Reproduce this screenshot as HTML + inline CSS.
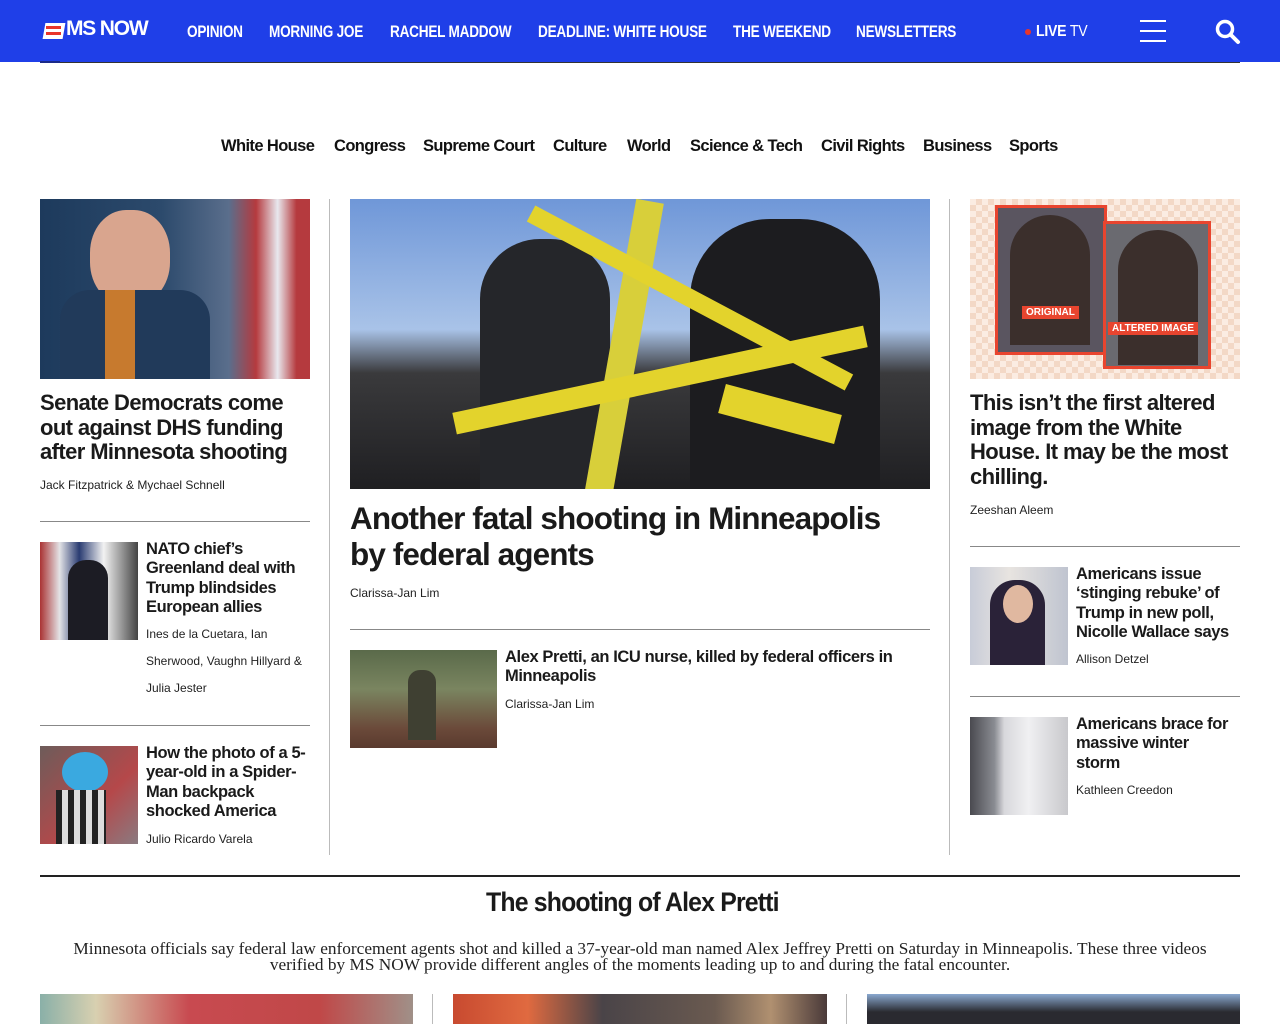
<!DOCTYPE html>
<html><head><meta charset="utf-8"><style>
*{margin:0;padding:0;box-sizing:border-box}
body{width:1280px;height:1024px;overflow:hidden;background:#fff;font-family:"Liberation Sans",sans-serif;color:#1a1a1a;position:relative}
.a{position:absolute}
.hdr{left:0;top:0;width:1280px;height:62px;background:#1f3fe8}
.nav{top:22px;color:#fff;font-weight:bold;font-size:17px;white-space:nowrap;transform:scaleX(0.8);transform-origin:0 0;letter-spacing:-0.3px}
.sec{top:137px;font-weight:bold;font-size:16.5px;color:#111;white-space:nowrap;letter-spacing:-0.6px}
h2{font-size:22px;line-height:24.5px;font-weight:bold;letter-spacing:-0.6px;color:#1a1a1a}
h3{font-size:16.5px;line-height:19.3px;font-weight:bold;letter-spacing:-0.4px;color:#1a1a1a}
.by{font-size:12px;color:#222;line-height:27px}
.hr{height:1px;background:#888}
.vr{width:1px;background:#bbb}
</style></head><body>
<div class="a hdr"></div>
<div class="a" style="left:40px;top:23px;width:24px;height:16px">
 <div class="a" style="left:4px;top:0;width:20px;height:16px;background:#fff;transform:skewX(-10deg)"></div>
 <div class="a" style="left:6px;top:3px;width:15px;height:3px;background:#e8352b"></div>
 <div class="a" style="left:6px;top:9px;width:15px;height:3px;background:#e8352b"></div>
</div>
<div class="a" style="left:66px;top:17px;color:#fff;font-weight:bold;font-size:21px;letter-spacing:-1.2px">MS NOW</div>
<div class="a nav" style="left:187px">OPINION</div>
<div class="a nav" style="left:269px">MORNING JOE</div>
<div class="a nav" style="left:390px">RACHEL MADDOW</div>
<div class="a nav" style="left:538px">DEADLINE: WHITE HOUSE</div>
<div class="a nav" style="left:733px">THE WEEKEND</div>
<div class="a nav" style="left:856px">NEWSLETTERS</div>
<div class="a" style="left:1025px;top:29px;width:6px;height:6px;border-radius:50%;background:#e8352b"></div>
<div class="a nav" style="left:1036px;top:23px;font-size:16px;transform:scaleX(0.88)">LIVE <span style="font-weight:normal">TV</span></div>
<div class="a" style="left:1140px;top:20px;width:26px;height:2px;background:#fff"></div>
<div class="a" style="left:1140px;top:30px;width:26px;height:2px;background:#fff"></div>
<div class="a" style="left:1140px;top:40px;width:26px;height:2px;background:#fff"></div>
<svg class="a" style="left:1214px;top:18px" width="28" height="28" viewBox="0 0 28 28"><circle cx="11" cy="11" r="7.5" fill="none" stroke="#fff" stroke-width="3.5"/><line x1="16.5" y1="16.5" x2="24" y2="24" stroke="#fff" stroke-width="4" stroke-linecap="round"/></svg>
<div class="a" style="left:40px;top:62px;width:1200px;height:1px;background:#333"></div>
<div class="a" style="left:40px;top:61px;width:20px;height:2px;background:#1a2a88"></div>

<div class="a sec" style="left:221px">White House</div>
<div class="a sec" style="left:334px">Congress</div>
<div class="a sec" style="left:423px">Supreme Court</div>
<div class="a sec" style="left:553px">Culture</div>
<div class="a sec" style="left:627px">World</div>
<div class="a sec" style="left:690px">Science &amp; Tech</div>
<div class="a sec" style="left:821px">Civil Rights</div>
<div class="a sec" style="left:923px">Business</div>
<div class="a sec" style="left:1009px">Sports</div>

<div class="a" style="left:40px;top:199px;width:270px;height:180px;background:linear-gradient(90deg,#1d3a5c 0%,#2c4a6c 45%,#5a6e8c 70%,#b53a3e 80%,#e8e8ee 88%,#b53a3e 95%)"></div>
<div class="a" style="left:90px;top:210px;width:80px;height:95px;border-radius:45%;background:#d9a58e"></div>
<div class="a" style="left:60px;top:290px;width:150px;height:89px;background:#213a5a;border-radius:30px 30px 0 0"></div>
<div class="a" style="left:105px;top:290px;width:30px;height:89px;background:#c77a2e"></div>
<h2 class="a" style="left:40px;top:391px;width:275px">Senate Democrats come out against DHS funding after Minnesota shooting</h2>
<div class="a by" style="left:40px;top:472px">Jack Fitzpatrick &amp; Mychael Schnell</div>
<div class="a hr" style="left:40px;top:521px;width:270px"></div>
<div class="a" style="left:40px;top:542px;width:98px;height:98px;background:linear-gradient(90deg,#a33 0%,#e3e3e6 20%,#2a3c72 40%,#f2f2f2 65%,#444 100%)"></div>
<div class="a" style="left:68px;top:560px;width:40px;height:80px;background:#1c1c24;border-radius:18px 18px 0 0"></div>
<h3 class="a" style="left:146px;top:540px;width:164px">NATO chief’s Greenland deal with Trump blindsides European allies</h3>
<div class="a by" style="left:146px;top:621px;width:164px">Ines de la Cuetara, Ian Sherwood, Vaughn Hillyard &amp; Julia Jester</div>
<div class="a hr" style="left:40px;top:725px;width:270px"></div>
<div class="a" style="left:40px;top:746px;width:98px;height:98px;background:linear-gradient(135deg,#6d5c5a,#b5484a 60%,#8a7a80)"></div>
<div class="a" style="left:62px;top:752px;width:46px;height:40px;border-radius:50%;background:#3aa9e0"></div>
<div class="a" style="left:56px;top:790px;width:50px;height:54px;background:repeating-linear-gradient(90deg,#222 0 6px,#ddd 6px 12px)"></div>
<h3 class="a" style="left:146px;top:744px;width:168px">How the photo of a 5-year-old in a Spider-Man backpack shocked America</h3>
<div class="a by" style="left:146px;top:826px">Julio Ricardo Varela</div>

<div class="a vr" style="left:329px;top:199px;height:656px"></div>
<div class="a vr" style="left:949px;top:199px;height:656px"></div>

<div class="a" style="left:350px;top:199px;width:580px;height:290px;background:linear-gradient(180deg,#6f97d8 0%,#a9c3e8 45%,#3a3a3c 60%,#1f1f22 100%);overflow:hidden">
 <div class="a" style="left:130px;top:40px;width:130px;height:250px;background:#25262a;border-radius:60px 60px 0 0"></div>
 <div class="a" style="left:340px;top:20px;width:190px;height:270px;background:#1c1c1f;border-radius:80px 80px 0 0"></div>
 <div class="a" style="left:260px;top:0;width:28px;height:300px;background:#d8cf3a;transform:rotate(10deg)"></div>
 <div class="a" style="left:100px;top:170px;width:420px;height:22px;background:#e3d32c;transform:rotate(-12deg)"></div>
 <div class="a" style="left:160px;top:90px;width:360px;height:18px;background:#e3d32c;transform:rotate(28deg)"></div>
 <div class="a" style="left:370px;top:200px;width:120px;height:30px;background:#e3d32c;transform:rotate(15deg)"></div>
</div>
<h2 class="a" style="left:350px;top:500px;width:600px;font-size:31.5px;line-height:36px;letter-spacing:-0.9px">Another fatal shooting in Minneapolis<br>by federal agents</h2>
<div class="a by" style="left:350px;top:580px">Clarissa-Jan Lim</div>
<div class="a hr" style="left:350px;top:629px;width:580px"></div>
<div class="a" style="left:350px;top:650px;width:147px;height:98px;background:linear-gradient(180deg,#5a6a4a,#7a8560 40%,#6b4a3a 80%,#5a3a2e)"></div>
<div class="a" style="left:408px;top:670px;width:28px;height:70px;background:#3f4032;border-radius:12px 12px 0 0"></div>
<h3 class="a" style="left:505px;top:648px;width:420px">Alex Pretti, an ICU nurse, killed by federal officers in Minneapolis</h3>
<div class="a by" style="left:505px;top:691px">Clarissa-Jan Lim</div>

<div class="a" style="left:970px;top:199px;width:270px;height:180px;background:repeating-conic-gradient(#f3d8c6 0 25%,#fbece2 0 50%) 0 0/12px 12px"></div>
<div class="a" style="left:995px;top:205px;width:112px;height:150px;background:#5a5560;border:3px solid #e8452f"></div>
<div class="a" style="left:1010px;top:215px;width:80px;height:130px;background:#3b2f2c;border-radius:40px 40px 0 0"></div>
<div class="a" style="left:1103px;top:221px;width:108px;height:148px;background:#6a6a70;border:3px solid #e8452f"></div>
<div class="a" style="left:1118px;top:230px;width:80px;height:135px;background:#3b2f2c;border-radius:40px 40px 0 0"></div>
<div class="a" style="left:1022px;top:306px;background:#e8452f;color:#fff;font-size:10px;font-weight:bold;padding:1px 4px">ORIGINAL</div>
<div class="a" style="left:1108px;top:322px;background:#e8452f;color:#fff;font-size:10px;font-weight:bold;padding:1px 4px">ALTERED IMAGE</div>
<h2 class="a" style="left:970px;top:391px;width:275px">This isn’t the first altered image from the White House. It may be the most chilling.</h2>
<div class="a by" style="left:970px;top:497px">Zeeshan Aleem</div>
<div class="a hr" style="left:970px;top:546px;width:270px"></div>
<div class="a" style="left:970px;top:567px;width:98px;height:98px;background:linear-gradient(90deg,#c8ccd8,#e8e4e0 40%,#bfc4d0)"></div>
<div class="a" style="left:990px;top:580px;width:55px;height:85px;background:#2a2238;border-radius:25px 25px 0 0"></div>
<div class="a" style="left:1003px;top:585px;width:30px;height:38px;background:#e0b8a0;border-radius:50%"></div>
<h3 class="a" style="left:1076px;top:565px;width:170px">Americans issue ‘stinging rebuke’ of Trump in new poll, Nicolle Wallace says</h3>
<div class="a by" style="left:1076px;top:646px">Allison Detzel</div>
<div class="a hr" style="left:970px;top:696px;width:270px"></div>
<div class="a" style="left:970px;top:717px;width:98px;height:98px;background:linear-gradient(90deg,#4a4a50 0%,#8a8c92 25%,#d8d8dc 35%,#f0f0f2 60%,#c8c8cc 100%)"></div>
<h3 class="a" style="left:1076px;top:715px;width:158px">Americans brace for massive winter storm</h3>
<div class="a by" style="left:1076px;top:777px">Kathleen Creedon</div>

<div class="a" style="left:40px;top:875px;width:1200px;height:2px;background:#222"></div>
<div class="a" style="left:486px;top:887px;font-size:27px;font-weight:bold;letter-spacing:-0.9px;white-space:nowrap;transform:scaleX(0.92);transform-origin:0 0">The shooting of Alex Pretti</div>
<div class="a" style="left:0;top:941px;width:1280px;text-align:center;font-family:'Liberation Serif',serif;font-size:17.3px;line-height:16px;color:#222;white-space:nowrap">Minnesota officials say federal law enforcement agents shot and killed a 37-year-old man named Alex Jeffrey Pretti on Saturday in Minneapolis. These three videos<br>verified by MS NOW provide different angles of the moments leading up to and during the fatal encounter.</div>
<div class="a" style="left:40px;top:994px;width:373px;height:30px;background:linear-gradient(90deg,#8ab0a8 0%,#d8d0b0 15%,#c84a50 40%,#c04848 75%,#a09088 100%)"></div>
<div class="a vr" style="left:432px;top:994px;height:30px"></div>
<div class="a" style="left:453px;top:994px;width:374px;height:30px;background:linear-gradient(90deg,#c84a30 0%,#e06a40 20%,#4a4448 40%,#6a5a50 70%,#b09070 85%,#4a3a3a 100%)"></div>
<div class="a vr" style="left:846px;top:994px;height:30px"></div>
<div class="a" style="left:867px;top:994px;width:373px;height:30px;background:linear-gradient(180deg,#8aa8d0 0%,#2a2a30 60%)"></div>
</body></html>
